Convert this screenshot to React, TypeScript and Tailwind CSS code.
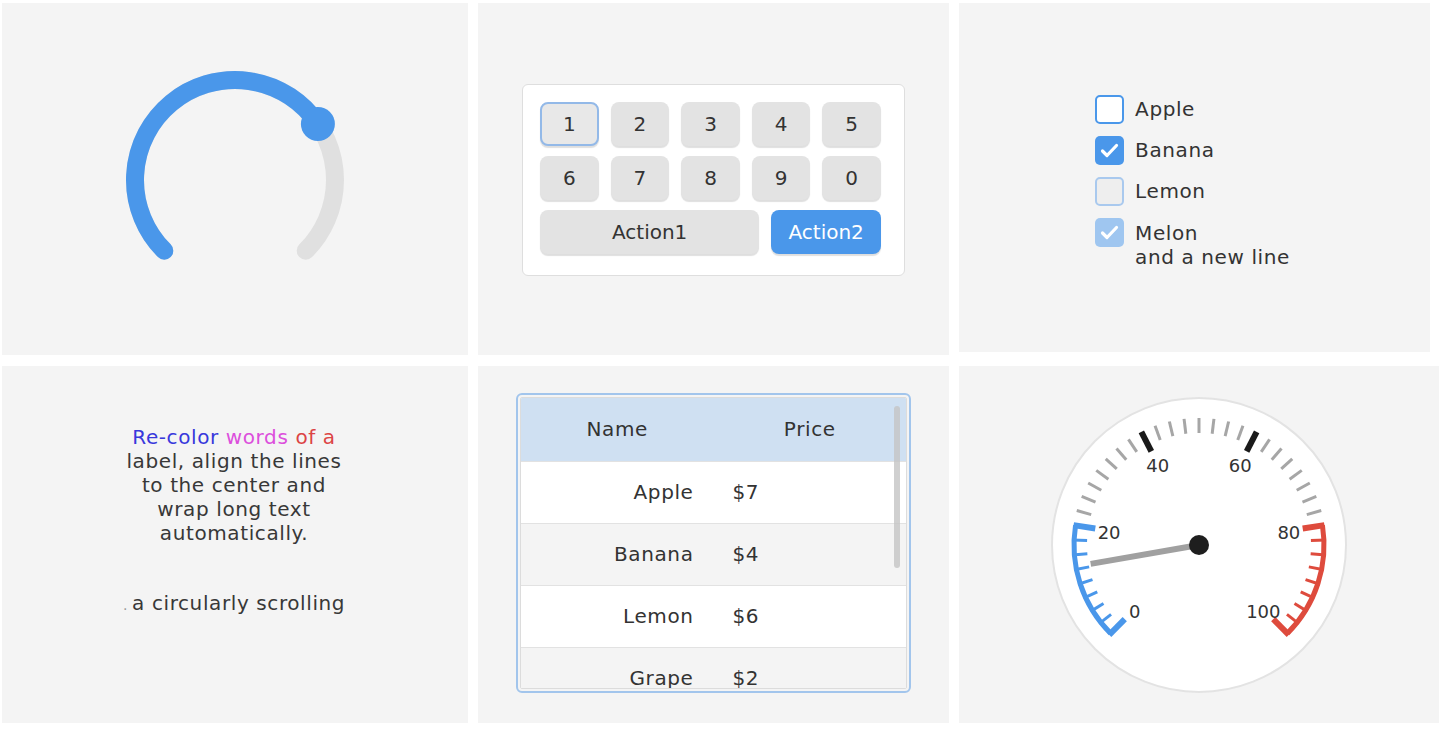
import React from 'react';

const BLUE = '#4a97ea';
const RED = '#de4b3d';

const rad = (d: number) => (d * Math.PI) / 180;
const pt = (cx: number, cy: number, r: number, deg: number) => [cx + r * Math.cos(rad(deg)), cy + r * Math.sin(rad(deg))];

const ArcPanel: React.FC = () => {
  const [sx, sy] = pt(130, 130, 100, 135);
  const [ex, ey] = pt(130, 130, 100, 45);
  const [kx, ky] = pt(130, 130, 100, 326);
  return (
    <div className="bg-[#f4f4f4] flex items-center justify-center">
      <svg width="260" height="260" viewBox="0 0 260 260" className="mt-[2px]">
        <path d={`M ${sx} ${sy} A 100 100 0 1 1 ${ex} ${ey}`} fill="none" stroke="#e0e0e0" strokeWidth="18" strokeLinecap="round" />
        <path d={`M ${sx} ${sy} A 100 100 0 1 1 ${kx} ${ky}`} fill="none" stroke={BLUE} strokeWidth="18" strokeLinecap="round" />
        <circle cx={kx} cy={ky} r="17" fill={BLUE} />
      </svg>
    </div>
  );
};

const Key: React.FC<{ label: string; className?: string }> = ({ label, className = '' }) => (
  <div
    className={`h-[44px] rounded-[8px] flex items-center justify-center text-[20px] shadow-[0_2px_1px_rgba(0,0,0,0.13)] ${className}`}
  >
    {label}
  </div>
);

const ButtonMatrix: React.FC = () => {
  const row1 = ['2', '3', '4', '5'];
  const row2 = ['6', '7', '8', '9', '0'];
  return (
    <div className="bg-[#f4f4f4] flex items-center justify-center">
      <div className="w-[383px] mt-[2px] bg-white border border-[#dedede] rounded-[6px] pl-[17px] pr-[23px] pt-[17px] pb-[21px] flex flex-col gap-[10px] text-[#333]">
        <div className="grid grid-cols-5 gap-[12px]">
          <Key label="1" className="bg-[#e8e8e8] border-2 border-[#93b9e8]" />
          {row1.map((k) => (
            <Key key={k} label={k} className="bg-[#e3e3e3]" />
          ))}
        </div>
        <div className="grid grid-cols-5 gap-[12px]">
          {row2.map((k) => (
            <Key key={k} label={k} className="bg-[#e3e3e3]" />
          ))}
        </div>
        <div className="grid grid-cols-[2fr_1fr] gap-[12px]">
          <Key label="Action1" className="bg-[#e3e3e3]" />
          <Key label="Action2" className="bg-[#4a97ea] text-white" />
        </div>
      </div>
    </div>
  );
};

const Check: React.FC = () => (
  <svg width="29" height="29" viewBox="0 0 29 29" className="absolute inset-0">
    <polyline points="7.5,15 12,19.5 21.5,9.5" fill="none" stroke="white" strokeWidth="3.2" strokeLinecap="round" strokeLinejoin="round" />
  </svg>
);

const Checkboxes: React.FC = () => (
  <div className="bg-[#f4f4f4] flex items-center justify-center mr-[9px] mb-[3px]">
    <div className="flex flex-col gap-[12px] text-[20px] tracking-[0.03em] text-[#333] mr-[4px] mt-[8px]">
      <div className="flex items-start gap-[11px]">
        <div className="relative w-[29px] h-[29px] rounded-[5px] bg-white border-2 border-[#4a97ea]" />
        <span className="leading-[29px]">Apple</span>
      </div>
      <div className="flex items-start gap-[11px]">
        <div className="relative w-[29px] h-[29px] rounded-[5px] bg-[#4a97ea]">
          <Check />
        </div>
        <span className="leading-[29px]">Banana</span>
      </div>
      <div className="flex items-start gap-[11px]">
        <div className="relative w-[29px] h-[29px] rounded-[5px] bg-[#eeeeee] border-2 border-[#a9c9ee]" />
        <span className="leading-[29px]">Lemon</span>
      </div>
      <div className="flex items-start gap-[11px]">
        <div className="relative w-[29px] h-[29px] rounded-[5px] bg-[#9fc6f0]">
          <Check />
        </div>
        <span className="leading-[24px] pt-[3px]">
          Melon
          <br />
          and a new line
        </span>
      </div>
    </div>
  </div>
);

const Labels: React.FC = () => (
  <div className="bg-[#f4f4f4] flex flex-col items-center pt-[59px] text-[20px] tracking-[0.03em] text-[#383838]">
    <div className="text-center leading-[24px] mr-[2px]">
      <span className="text-[#3838dc]">Re-color</span> <span className="text-[#dc4fdc]">words</span>{' '}
      <span className="text-[#dc4444]">of a</span>
      <br />
      label, align the lines
      <br />
      to the center and
      <br />
      wrap long text
      <br />
      automatically.
    </div>
    <div className="mt-[46px] w-[222px] whitespace-nowrap leading-[24px] flex items-baseline mr-[2px]">
      <span className="text-[#9a9a9a] text-[14px]">.</span>
      <span className="pl-[4px]">a circularly scrolling</span>
    </div>
  </div>
);

const rows = [
  ['Apple', '$7'],
  ['Banana', '$4'],
  ['Lemon', '$6'],
  ['Grape', '$2'],
];

const Table: React.FC = () => (
  <div className="bg-[#f4f4f4] flex items-center justify-center">
    <div className="relative w-[387px] h-[292px] mb-[4px] bg-white border border-[#dcdcdc] outline-2 outline-[#a2c5ec] outline-offset-[2px] rounded-[2px] overflow-hidden text-[20px] tracking-[0.03em] text-[#333]">
      <div className="grid grid-cols-2 h-[63px] bg-[#cfe0f2] items-center text-center">
        <span>Name</span>
        <span>Price</span>
      </div>
      {rows.map(([n, p], i) => (
        <div
          key={n}
          className={`grid grid-cols-2 h-[62px] items-center border-t border-[#e2e2e2] ${i % 2 === 1 ? 'bg-[#f4f4f4]' : 'bg-white'}`}
        >
          <span className="text-right pr-[20px]">{n}</span>
          <span className="pl-[19px]">{p}</span>
        </div>
      ))}
      <div className="absolute top-[8px] right-[6px] w-[6px] h-[162px] rounded-full bg-[#c4c4c4]/80" />
    </div>
  </div>
);

const Meter: React.FC = () => {
  const cx = 150;
  const cy = 150;
  const R = 127;
  const ang = (v: number) => 135 + v * 2.7;
  const ticks = Array.from({ length: 41 }, (_, i) => i);
  const colorFor = (v: number, major: boolean) => {
    if (v <= 20) return BLUE;
    if (v >= 80) return RED;
    return major ? '#1a1a1a' : '#a6a6a6';
  };
  const arcPath = (v0: number, v1: number, r: number) => {
    const [x0, y0] = pt(cx, cy, r, ang(v0));
    const [x1, y1] = pt(cx, cy, r, ang(v1));
    return `M ${x0} ${y0} A ${r} ${r} 0 0 1 ${x1} ${y1}`;
  };
  const [nx, ny] = pt(cx, cy, 110, ang(13));
  return (
    <div className="bg-[#f4f4f4] flex items-center justify-center">
      <svg width="300" height="300" viewBox="0 0 300 300">
        <circle cx={cx} cy={cy} r="147" fill="white" stroke="#e3e3e3" strokeWidth="2" />
        <path d={arcPath(0, 20, R - 2)} fill="none" stroke={BLUE} strokeWidth="5" />
        <path d={arcPath(80, 100, R - 2)} fill="none" stroke={RED} strokeWidth="5" />
        {ticks.map((i) => {
          const v = i * 2.5;
          const major = i % 8 === 0;
          const len = major ? 22 : 15;
          const [x0, y0] = pt(cx, cy, R, ang(v));
          const [x1, y1] = pt(cx, cy, R - len, ang(v));
          return (
            <line key={i} x1={x0} y1={y0} x2={x1} y2={y1} stroke={colorFor(v, major)} strokeWidth={major ? 6 : 3} />
          );
        })}
        {[0, 20, 40, 60, 80, 100].map((v) => {
          const [x, y] = pt(cx, cy, 91, ang(v));
          return (
            <text
              key={v}
              x={x}
              y={y + 2}
              textAnchor="middle"
              dominantBaseline="central"
              fontSize="18"
              fill="#333"
              fontFamily="'DejaVu Sans', sans-serif"
            >
              {v}
            </text>
          );
        })}
        <line x1={cx} y1={cy} x2={nx} y2={ny} stroke="#a0a0a0" strokeWidth="6" />
        <circle cx={cx} cy={cy} r="10" fill="#1e1e1e" />
      </svg>
    </div>
  );
};

export default function App() {
  return (
    <div className="w-[1440px] h-[730px] bg-white overflow-hidden pl-[2px] pt-[3px] font-['DejaVu_Sans',sans-serif]">
      <div className="grid grid-cols-[466px_471px_480px] grid-rows-[352px_357px] gap-x-[10px] gap-y-[11px]">
        <ArcPanel />
        <ButtonMatrix />
        <Checkboxes />
        <Labels />
        <Table />
        <Meter />
      </div>
    </div>
  );
}
